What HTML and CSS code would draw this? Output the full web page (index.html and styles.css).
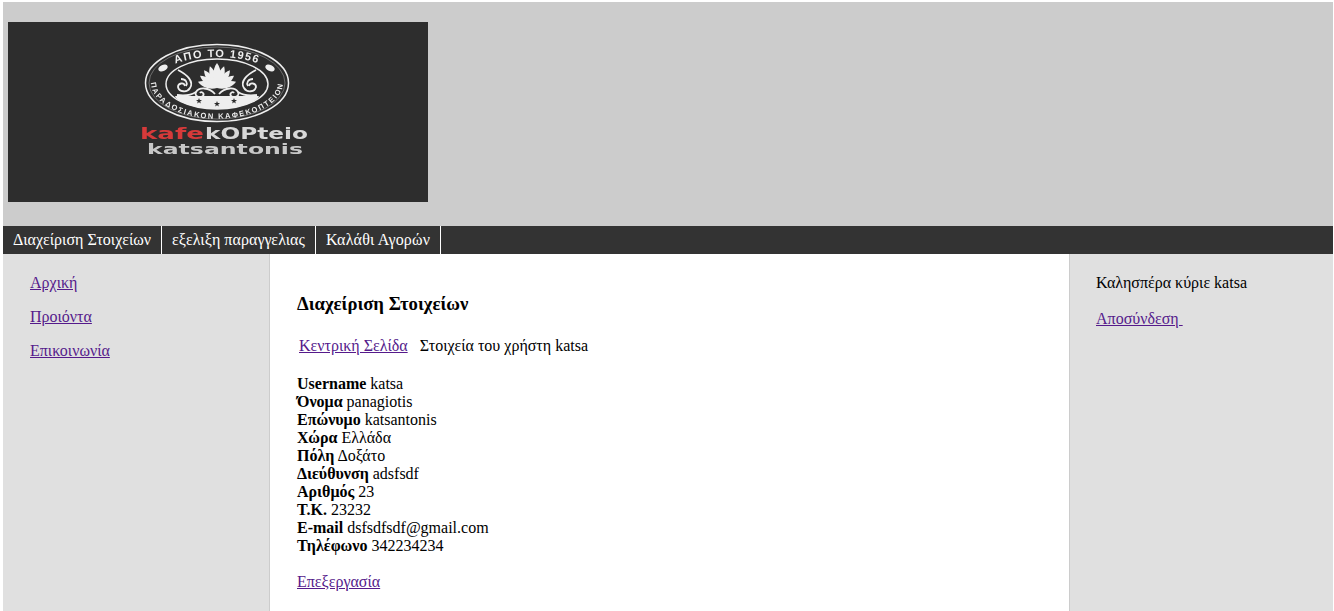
FILE: index.html
```html
<!DOCTYPE html>
<html lang="el">
<head>
    <meta charset="UTF-8">
    <title>Διαχείριση Στοιχείων</title>
    <link rel="stylesheet" href="styles.css">
</head>
<body>
    <header class="top">
        <svg class="logo" width="420" height="180" viewBox="0 0 420 180" role="img" aria-label="kafekopteio katsantonis">
            <defs>
                <path id="arc-top" d="M147 61A62 26 0 0 1 271 61"/>
                <path id="arc-bottom" d="M145 52A66 36 0 1 0 273 52"/>
                <path id="petal" d="M0 0C-4.500 -6 -4 -15 0 -20C4 -15 4.500 -6 0 0Z"/>
                <polygon id="star" points="0,-3 .8,-1 3,-1 1.200,.4 1.900,2.600 0,1.200 -1.900,2.600 -1.200,.4 -3,-1 -.8,-1"/>
                <g id="volute">
                    <path d="M-39 -17C-29 -12 -23 -5 -27 1C-30 6 -38 5 -39 0C-39 -4 -33 -5 -32 -1"/>
                    <path d="M-36 -8C-31 -8 -29 -4 -31 -1"/>
                    <path d="M-2 7C-8 0 -18 0 -21 5C-23 9 -17 12 -14 9C-12 6 -16 4 -17 6"/>
                    <path d="M-21 5C-27 9 -33 9 -40 8"/>
                </g>
            </defs>
            <rect width="420" height="180" fill="#2d2d2d"/>

            <g class="art">
                <!-- seal -->
                <ellipse class="ring" cx="209" cy="61" rx="71.500" ry="38.500"/>
                <ellipse class="ring thin" cx="209" cy="61" rx="68" ry="36"/>
                <ellipse class="ring" cx="209" cy="62" rx="51" ry="25"/>
                <text class="seal-top"><textPath href="#arc-top" startOffset="50%">ΑΠΟ ΤΟ 1956</textPath></text>
                <text class="seal-bottom"><textPath href="#arc-bottom" startOffset="50%">ΠΑΡΑΔΟΣΙΑΚΟΝ ΚΑΦΕΚΟΠΤΕΙΟΝ</textPath></text>
                <ellipse class="bean" cx="155" cy="46" rx="5" ry="3" transform="rotate(-25 155 46)"/>
                <ellipse class="bean" cx="262" cy="46" rx="5" ry="3" transform="rotate(25 262 46)"/>

                <!-- palmette -->
                <g class="fan" transform="translate(209 66)">
                    <use href="#petal" transform="rotate(-72)"/>
                    <use href="#petal" transform="rotate(-54) scale(1 1.050)"/>
                    <use href="#petal" transform="rotate(-36) scale(1 1.100)"/>
                    <use href="#petal" transform="rotate(-18) scale(1 1.150)"/>
                    <use href="#petal" transform="scale(1.200 1.250)"/>
                    <use href="#petal" transform="rotate(18) scale(1 1.150)"/>
                    <use href="#petal" transform="rotate(36) scale(1 1.100)"/>
                    <use href="#petal" transform="rotate(54) scale(1 1.050)"/>
                    <use href="#petal" transform="rotate(72)"/>
                </g>
                <g class="scroll" transform="translate(209 65)">
                    <use href="#volute"/>
                    <use href="#volute" transform="scale(-1 1)"/>
                </g>
                <path class="bowl" d="M167 74H251C249 80 232 87 209 87C186 87 169 80 167 74Z"/>
                <use class="dark" href="#star" x="191" y="79"/>
                <use class="dark" href="#star" x="209" y="82"/>
                <use class="dark" href="#star" x="226" y="79"/>

                <!-- wordmark -->
                <text class="word red" x="132" y="117" textLength="64" lengthAdjust="spacingAndGlyphs">kafe</text>
                <text class="word" x="197" y="117" textLength="103" lengthAdjust="spacingAndGlyphs">kOPteio</text>
                <text class="word small" x="139" y="132" textLength="156" lengthAdjust="spacingAndGlyphs">katsantonis</text>
            </g>
        </svg>
    </header>

    <nav class="menu">
        <a href="#">Διαχείριση Στοιχείων</a>
        <a class="wide" href="#">εξελιξη παραγγελιας</a>
        <a class="wider" href="#">Καλάθι Αγορών</a>
    </nav>

    <div class="columns">
        <aside class="side-left">
            <p><a href="#">Αρχική</a></p>
            <p><a href="#">Προιόντα</a></p>
            <p><a href="#">Επικοινωνία</a></p>
        </aside>

        <main class="content">
            <h3>Διαχείριση Στοιχείων</h3>
            <div class="crumbs">
                <a href="#">Κεντρική Σελίδα</a>
                <span>Στοιχεία του χρήστη katsa</span>
            </div>
            <div class="details">
                <b>Username</b> katsa<br>
                <b>Όνομα</b> panagiotis<br>
                <b>Επώνυμο</b> katsantonis<br>
                <b>Χώρα</b> Ελλάδα<br>
                <b>Πόλη</b> Δοξάτο<br>
                <b>Διεύθυνση</b> adsfsdf<br>
                <b>Αριθμός</b> 23<br>
                <b>Τ.Κ.</b> 23232<br>
                <b>E-mail</b> dsfsdfsdf@gmail.com<br>
                <b>Τηλέφωνο</b> 342234234
            </div>
            <a href="#">Επεξεργασία</a>
        </main>

        <aside class="side-right">
            <p class="greeting">Καλησπέρα κύριε katsa</p>
            <a href="#">Αποσύνδεση&nbsp;</a>
        </aside>
    </div>
</body>
</html>
```

FILE: styles.css
```css
* {
    box-sizing: border-box;
}

body {
    margin: 2px 1px 0 3px;
    font-family: "Liberation Serif", serif;
    font-size: 16px;
    color: #000;
    background-color: #fff;
}

a {
    color: #551a8b;
}

/* Header */
.top {
    height: 224px;
    padding: 20px 0 0 5px;
    background-color: #ccc;
}

.logo {
    display: block;
}

.art {
    filter: blur(.3px);
}

.ring {
    fill: none;
    stroke: #eee;
    stroke-width: 1.5;
}

.ring.thin {
    stroke-width: .6;
    stroke: #999;
}

.seal-top,
.seal-bottom {
    font-family: "Liberation Sans", sans-serif;
    font-weight: bold;
    fill: #eee;
    text-anchor: middle;
}

.seal-top {
    font-size: 11px;
    letter-spacing: 1.3px;
}

.seal-bottom {
    font-size: 7.5px;
    letter-spacing: 1.6px;
}

.bean,
.fan,
.bowl {
    fill: #eee;
}

.scroll {
    fill: none;
    stroke: #eee;
    stroke-width: 1.8;
}

.dark {
    fill: #2d2d2d;
}

.word {
    font-family: "DejaVu Sans", sans-serif;
    font-weight: bold;
    font-size: 16px;
    fill: #d8d8d8;
}

.word.small {
    font-size: 14px;
    fill: #c8c8c8;
}

.word.red {
    fill: #d63a3a;
}

/* Menu */
.menu {
    display: flex;
    background-color: #333;
}

.menu a {
    padding: 5px 10px;
    color: #fff;
    text-decoration: none;
    border-right: 1px solid #fff;
}

.menu .wide {
    letter-spacing: .05px;
}

.menu .wider {
    letter-spacing: .18px;
}

/* Columns */
.columns {
    display: grid;
    grid-template-columns: 267px 800px 1fr;
}

.side-left,
.side-right {
    background-color: #e0e0e0;
}

.side-left {
    padding: 4px 27px 0;
    border-right: 1px solid #ccc;
}

.side-left p {
    margin: 16px 0;
}

.content {
    padding: 39px 27px 20px;
    border-right: 1px solid #ccc;
}

.content h3 {
    margin: 0 0 22px;
}

.crumbs {
    display: flex;
    gap: 10px;
}

.crumbs a {
    padding: 0 2px;
}

.details {
    margin: 20px 0 18px;
}

.side-right {
    padding: 20px 26px 0;
}

.greeting {
    margin: 0 0 18px;
}
```
